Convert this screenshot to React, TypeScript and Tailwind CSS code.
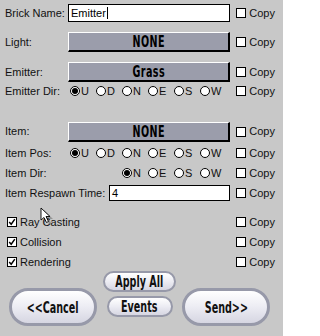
import React from 'react'

const labelFont = { fontFamily: '"Liberation Sans", Arial, sans-serif' }
const narrowFont = { fontFamily: '"DejaVu Sans Condensed", "Liberation Sans", sans-serif' }

function CopyBox() {
  return (
    <div className="ml-auto flex items-center gap-[3px] pr-[8px]">
      <span className="block w-[10px] h-[10px] bg-white border border-black" />
      <span className="text-[11px] text-[#111] leading-none">Copy</span>
    </div>
  )
}

function Radio({ label, checked }: { label: string; checked?: boolean }) {
  return (
    <div className="flex items-center w-[26px] shrink-0">
      <span className="w-[10px] h-[10px] rounded-full bg-white border border-black flex items-center justify-center">
        {checked && <span className="w-[6px] h-[6px] rounded-full bg-black" />}
      </span>
      <span className="ml-[1px] text-[11px] leading-none text-[#111]">{label}</span>
    </div>
  )
}

function PopupButton({ text }: { text: string }) {
  return (
    <div className="ml-[63px] w-[162px] h-[20px] bg-[#9b9dab] border-t border-l border-t-white border-l-white border-r-[2px] border-b-[2px] border-r-black border-b-black flex items-center justify-center">
      <span
        className="inline-block text-[13px] font-bold text-black leading-none scale-x-[0.82] scale-y-[1.2] tracking-[0.5px]"
        style={narrowFont}
      >
        {text}
      </span>
    </div>
  )
}

function Label({ text, w = 63 }: { text: string; w?: number }) {
  return (
    <span className="text-[11px] leading-none text-[#111] whitespace-nowrap" style={{ width: w }}>
      {text}
    </span>
  )
}

function CheckRow({ text }: { text: string }) {
  return (
    <div className="flex items-center h-[14px] mt-[6px]">
      <span className="ml-[2px] w-[10px] h-[10px] bg-white border border-black flex items-center justify-center">
        <svg viewBox="0 0 10 10" className="w-[8px] h-[8px]">
          <path d="M1.5 5 L4 7.8 L8.5 1.5" stroke="black" strokeWidth="1.8" fill="none" />
        </svg>
      </span>
      <span className="ml-[3px] text-[11px] leading-none text-[#111]">{text}</span>
      <CopyBox />
    </div>
  )
}

function PillButton({ text, big }: { text: string; big?: boolean }) {
  return (
    <div
      className={
        big
          ? 'w-[88px] h-[38px] rounded-full border-[3px] border-[#9799a9] bg-gradient-to-b from-white via-[#ececf3] to-[#d6d6e2] flex items-center justify-center'
          : 'h-[21px] rounded-full border-[2px] border-[#9799a9] bg-gradient-to-b from-white via-[#ececf3] to-[#d6d6e2] flex items-center justify-center'
      }
    >
      <span
        className="inline-block text-[13px] font-bold text-[#111] leading-none scale-x-[0.82] scale-y-[1.2] whitespace-nowrap"
        style={narrowFont}
      >
        {text}
      </span>
    </div>
  )
}

export default function App() {
  return (
    <div className="relative w-[283px] h-[336px] bg-[#c8c8c8] overflow-hidden" style={labelFont}>
      <div className="flex flex-col pl-[5px]">
        {/* Brick name */}
        <div className="flex items-center h-[18px] mt-[4px]">
          <Label text="Brick Name:" />
          <div className="w-[162px] h-[18px] bg-white border border-black flex items-center pl-[2px]">
            <span className="text-[11px] leading-none text-black">Emitter</span>
            <span className="w-px h-[12px] bg-black ml-[1px]" />
          </div>
          <CopyBox />
        </div>

        <div className="flex items-center h-[20px] mt-[10px]">
          <Label text="Light:" w={0} />
          <PopupButton text="NONE" />
          <CopyBox />
        </div>

        <div className="flex items-center h-[20px] mt-[10px]">
          <Label text="Emitter:" w={0} />
          <PopupButton text="Grass" />
          <CopyBox />
        </div>

        <div className="flex items-center h-[14px] mt-[2px]">
          <Label text="Emitter Dir:" w={65} />
          <Radio label="U" checked />
          <Radio label="D" />
          <Radio label="N" />
          <Radio label="E" />
          <Radio label="S" />
          <Radio label="W" />
          <CopyBox />
        </div>

        <div className="flex items-center h-[21px] mt-[23px]">
          <Label text="Item:" w={0} />
          <PopupButton text="NONE" />
          <CopyBox />
        </div>

        <div className="flex items-center h-[14px] mt-[4px]">
          <Label text="Item Pos:" w={65} />
          <Radio label="U" checked />
          <Radio label="D" />
          <Radio label="N" />
          <Radio label="E" />
          <Radio label="S" />
          <Radio label="W" />
          <CopyBox />
        </div>

        <div className="flex items-center h-[14px] mt-[6px]">
          <Label text="Item Dir:" w={117} />
          <Radio label="N" checked />
          <Radio label="E" />
          <Radio label="S" />
          <Radio label="W" />
          <CopyBox />
        </div>

        <div className="flex items-center h-[16px] mt-[5px]">
          <Label text="Item Respawn Time:" w={104} />
          <div className="w-[121px] h-[16px] bg-white border border-black flex items-center pl-[2px]">
            <span className="text-[11px] leading-none text-black">4</span>
          </div>
          <CopyBox />
        </div>

        <div className="mt-[8px]" />
        <CheckRow text="Ray Casting" />
        <CheckRow text="Collision" />
        <CheckRow text="Rendering" />
      </div>

      {/* Bottom buttons */}
      <div className="flex items-start mt-[2px] pl-[9px]">
        <div className="mt-[17px]">
          <PillButton text="<<Cancel" big />
        </div>
        <div className="flex flex-col items-center w-[85px] gap-[4px]">
          <div className="w-[73px]">
            <PillButton text="Apply All" />
          </div>
          <div className="w-[66px]">
            <PillButton text="Events" />
          </div>
        </div>
        <div className="mt-[17px]">
          <PillButton text="Send>>" big />
        </div>
      </div>

      {/* mouse cursor */}
      <svg className="absolute left-[40px] top-[207px]" width="16" height="18" viewBox="0 0 16 18">
        <path d="M2 2 L2 15 L5 12 L7.5 17 L9.5 16 L7 11 L11 11 Z" fill="#333" opacity="0.35" transform="translate(2 1)" />
        <path d="M1 1 L1 13 L4 10.5 L6.5 15.5 L8.5 14.5 L6 9.5 L10 9.5 Z" fill="white" stroke="black" strokeWidth="0.9" />
      </svg>
    </div>
  )
}
